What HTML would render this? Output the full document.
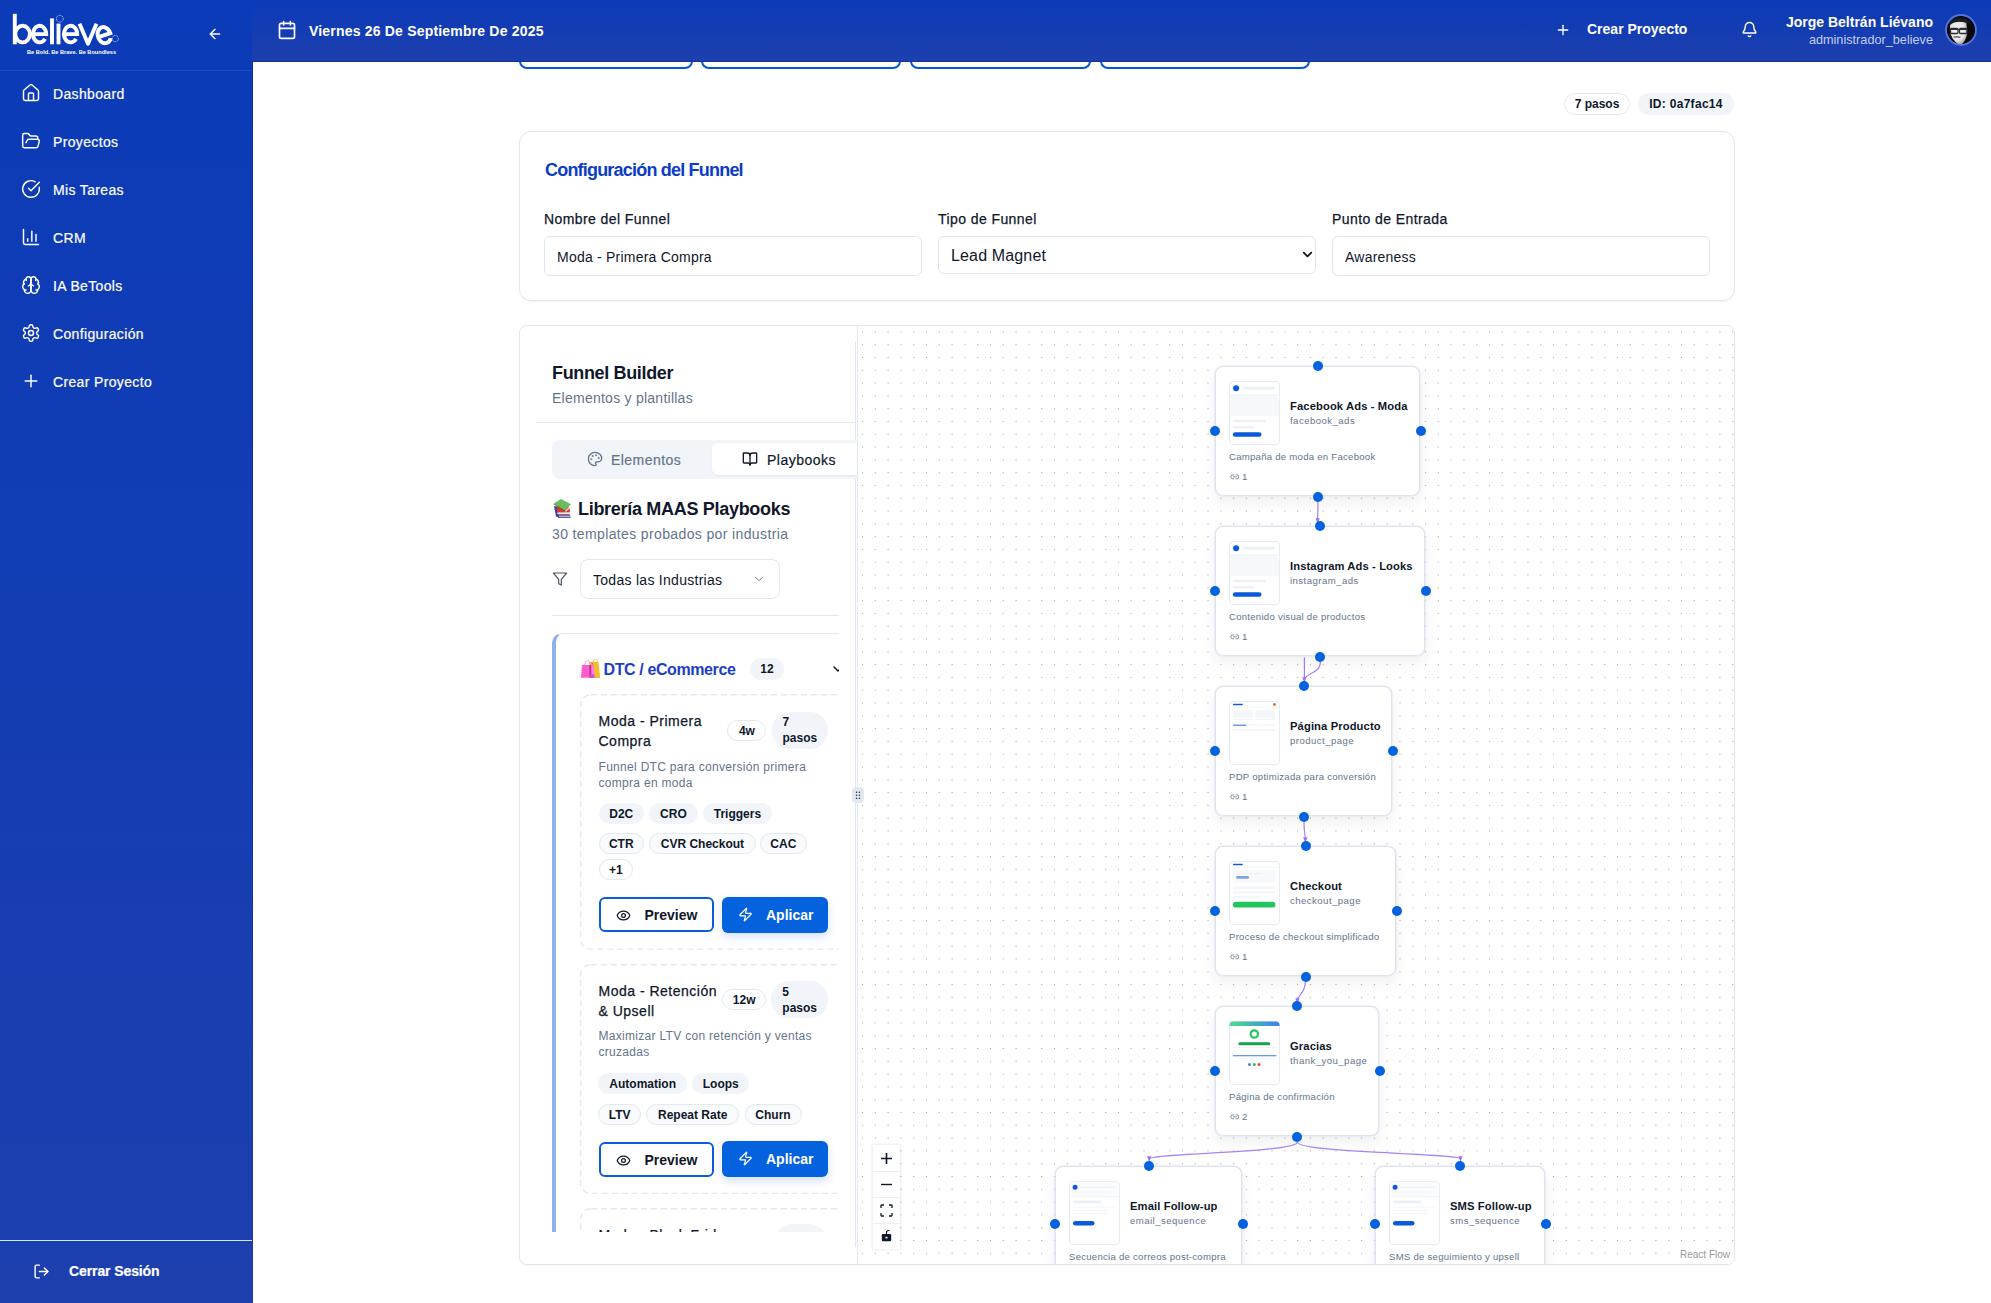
<!DOCTYPE html>
<html><head><meta charset="utf-8">
<style>
*{box-sizing:border-box;margin:0;padding:0}
html,body{width:1991px;height:1303px;overflow:hidden;background:#fff;font-family:"Liberation Sans",sans-serif;color:#0f172a}
.abs{position:absolute}
svg.ic{position:absolute;fill:none;stroke:currentColor;stroke-width:2;stroke-linecap:round;stroke-linejoin:round}
#sb{position:absolute;left:0;top:0;width:253px;height:1303px;background:linear-gradient(180deg,#0b3bb8 0%,#1d3fae 100%);color:#fff}
#tb{position:absolute;left:252px;top:0;width:1739px;height:62px;background:linear-gradient(180deg,#0b3ab8 0%,#1d3fae 100%);border-bottom:1px solid #1233a2;color:#fff;z-index:5}
.nav{position:absolute;left:0;width:252px;height:40px;color:#fff;font-size:14px}
.nav svg{left:21px;top:10.5px;width:20px;height:20px;stroke-width:1.75}
.nav span{position:absolute;left:53px;top:13.5px;line-height:16px;white-space:nowrap;letter-spacing:0.35px;-webkit-text-stroke:0.2px #fff}
.txt{position:absolute;white-space:nowrap;line-height:1}

.tabbox{position:absolute;top:-39px;height:46px;border:2px solid #0656d6;border-radius:8px;background:#fff}
.badge{position:absolute;height:21px;border-radius:11px;font-size:12px;font-weight:700;line-height:19px;text-align:center;white-space:nowrap}
.card{position:absolute;border:1px solid #e2e8f0;border-radius:12px;background:#fff;box-shadow:0 1px 2px rgba(15,23,42,0.05)}
.lbl{position:absolute;font-size:14px;white-space:nowrap;line-height:1;color:#0f172a;letter-spacing:0.42px;-webkit-text-stroke:0.25px #0f172a}
.inp{position:absolute;height:40px;border:1px solid #dfe5ee;border-radius:6px;background:#fff;font-size:14px;line-height:41px;padding-left:12px;color:#0f172a;white-space:nowrap;letter-spacing:0.22px}

.pbcard{position:absolute;left:28px;width:280px;border-radius:10px;background:#fff}
.pt{position:absolute;font-size:14px;line-height:20px;color:#0f172a;letter-spacing:0.5px;-webkit-text-stroke:0.25px #0f172a}
.pd{position:absolute;font-size:12px;line-height:16px;color:#64748b;letter-spacing:0.3px}
.tag{position:absolute;height:21px;border-radius:11px;font-size:12px;font-weight:700;line-height:22.5px;text-align:center;white-space:nowrap;background:#f1f5f9;color:#0f172a}
.tag.b{border:1px solid #e2e8f0;background:#f8fafc;line-height:20.5px}
.tag.w{border:1px solid #e2e8f0;background:#fff;line-height:20.5px}
.btnp{position:absolute;height:35px;border:2px solid #085ddb;border-radius:6px;background:#fff;font-size:14px;font-weight:700;color:#0f172a;white-space:nowrap}
.btna{position:absolute;height:36px;border-radius:6px;background:#0562de;font-size:14px;font-weight:700;color:#fff;white-space:nowrap;box-shadow:0 4px 10px rgba(11,90,214,0.18)}

.node{position:absolute;height:130px;border:1px solid #dde4ee;border-radius:8px;background:#fff;box-shadow:0 0 0 0.6px #e2e8f0,0 6px 14px rgba(15,23,42,0.07)}
.thumb{position:absolute;left:13px;top:13.6px;width:51px;height:64px}
.nt{position:absolute;left:74px;font-size:11.2px;font-weight:700;color:#0f172a;white-space:nowrap;line-height:1;letter-spacing:0.12px}
.ns{position:absolute;left:74px;font-size:9.6px;color:#64748b;white-space:nowrap;line-height:1;letter-spacing:0.45px}
.nd{position:absolute;left:13px;font-size:9.6px;color:#64748b;white-space:nowrap;line-height:1;letter-spacing:0.25px}
.hd{position:absolute;width:10px;height:10px;border-radius:50%;background:#0562de}
</style></head><body>

<!-- SIDEBAR -->
<div id="sb">
  <div class="abs" style="left:252px;top:0;width:1px;height:1303px;background:linear-gradient(180deg,#0a2ea6 0%,#0a2fa8 50%,#1a3cab 100%)"></div>
  <div class="abs" style="left:0;top:70px;width:252px;height:1px;background:rgba(255,255,255,0.08)"></div>
  <svg class="abs" style="left:0;top:0" width="125" height="60" viewBox="0 0 125 60">
    <g fill="none" stroke="#fff" stroke-width="3.9" stroke-linecap="butt">
      <path d="M14.8,13.8 V44.3"/>
      <ellipse cx="22.6" cy="34.1" rx="7.3" ry="8.3"/>
      <path d="M33.30,34.10 H46.20 A6.6,8.3 0 1 0 45.01,38.86"/>
      <path d="M52,18.4 V44.3"/>
      <path d="M58.5,23.6 V44.3"/>
      <path d="M64.30,34.10 H77.20 A6.6,8.3 0 1 0 76.01,38.86"/>
      <path d="M79.5,23.8 L88,43.8 L96.5,23.8" stroke-linejoin="round"/>
      <path d="M98.10,35.20 H110.60 A6.4,8.2 0 1 0 109.44,39.90" transform="rotate(-18 104.2 35.2)"/>
    </g>
    <circle cx="59.8" cy="18.7" r="3.4" fill="none" stroke="#fff" stroke-width="0.7" stroke-dasharray="1.1 0.7"/>
    <circle cx="115.3" cy="38.6" r="3.1" fill="none" stroke="#fff" stroke-width="0.7" stroke-dasharray="1.1 0.7"/>
    <text x="27" y="53.6" font-family="Liberation Sans" font-weight="700" font-size="5.6" fill="#fff" textLength="89" lengthAdjust="spacingAndGlyphs">Be Bold. Be Brave. Be Boundless</text>
  </svg>
  <div class="nav" style="top:72px"><svg class="ic" viewBox="0 0 24 24"><path d="M15 21v-8a1 1 0 0 0-1-1h-4a1 1 0 0 0-1 1v8"/><path d="M3 10a2 2 0 0 1 .709-1.528l7-5.999a2 2 0 0 1 2.582 0l7 5.999A2 2 0 0 1 21 10v9a2 2 0 0 1-2 2H5a2 2 0 0 1-2-2z"/></svg><span>Dashboard</span></div>
  <div class="nav" style="top:120px"><svg class="ic" viewBox="0 0 24 24"><path d="m6 14 1.5-2.9A2 2 0 0 1 9.240 10H20a2 2 0 0 1 1.940 2.5l-1.540 6a2 2 0 0 1-1.950 1.5H4a2 2 0 0 1-2-2V5a2 2 0 0 1 2-2h3.900a2 2 0 0 1 1.690.9l.810 1.200a2 2 0 0 0 1.670.900H18a2 2 0 0 1 2 2v2"/></svg><span>Proyectos</span></div>
  <div class="nav" style="top:168px"><svg class="ic" viewBox="0 0 24 24"><path d="M21.801 10A10 10 0 1 1 17 3.335"/><path d="m9 11 3 3L22 4"/></svg><span>Mis Tareas</span></div>
  <div class="nav" style="top:216px"><svg class="ic" viewBox="0 0 24 24"><path d="M3 3v16a2 2 0 0 0 2 2h16"/><path d="M18 17V9"/><path d="M13 17V5"/><path d="M8 17v-3"/></svg><span>CRM</span></div>
  <div class="nav" style="top:264px"><svg class="ic" viewBox="0 0 24 24"><path d="M12 5a3 3 0 1 0-5.997.125 4 4 0 0 0-2.526 5.770 4 4 0 0 0 .556 6.588A4 4 0 1 0 12 18Z"/><path d="M12 5a3 3 0 1 1 5.997.125 4 4 0 0 1 2.526 5.770 4 4 0 0 1-.556 6.588A4 4 0 1 1 12 18Z"/><path d="M15 13a4.500 4.500 0 0 1-3-4 4.500 4.500 0 0 1-3 4"/><path d="M17.599 6.500a3 3 0 0 0 .399-1.375"/><path d="M6.003 5.125A3 3 0 0 0 6.401 6.500"/><path d="M3.477 10.896a4 4 0 0 1 .585-.396"/><path d="M19.938 10.500a4 4 0 0 1 .585.396"/><path d="M6 18a4 4 0 0 1-1.967-.516"/><path d="M19.967 17.484A4 4 0 0 1 18 18"/></svg><span>IA BeTools</span></div>
  <div class="nav" style="top:312px"><svg class="ic" viewBox="0 0 24 24"><path d="M12.220 2h-.440a2 2 0 0 0-2 2v.180a2 2 0 0 1-1 1.730l-.430.250a2 2 0 0 1-2 0l-.150-.080a2 2 0 0 0-2.730.730l-.220.380a2 2 0 0 0 .730 2.730l.150.100a2 2 0 0 1 1 1.720v.510a2 2 0 0 1-1 1.740l-.150.090a2 2 0 0 0-.730 2.730l.220.380a2 2 0 0 0 2.730.730l.150-.080a2 2 0 0 1 2 0l.430.250a2 2 0 0 1 1 1.730V20a2 2 0 0 0 2 2h.440a2 2 0 0 0 2-2v-.180a2 2 0 0 1 1-1.730l.430-.250a2 2 0 0 1 2 0l.150.080a2 2 0 0 0 2.730-.730l.220-.390a2 2 0 0 0-.730-2.730l-.150-.080a2 2 0 0 1-1-1.740v-.500a2 2 0 0 1 1-1.740l.150-.090a2 2 0 0 0 .730-2.730l-.220-.380a2 2 0 0 0-2.730-.730l-.150.080a2 2 0 0 1-2 0l-.430-.250a2 2 0 0 1-1-1.730V4a2 2 0 0 0-2-2z"/><circle cx="12" cy="12" r="3"/></svg><span>Configuración</span></div>
  <div class="nav" style="top:360px"><svg class="ic" viewBox="0 0 24 24"><path d="M5 12h14"/><path d="M12 5v14"/></svg><span>Crear Proyecto</span></div>
  <div class="abs" style="left:0;top:1240px;width:252px;height:1px;background:rgba(255,255,255,0.85)"></div>
  <div class="nav" style="top:1250px"><svg class="ic" style="left:32.5px;top:12.5px;width:17px;height:17px;stroke-width:2" viewBox="0 0 24 24"><path d="M9 21H5a2 2 0 0 1-2-2V5a2 2 0 0 1 2-2h4"/><polyline points="16 17 21 12 16 7"/><line x1="21" x2="9" y1="12" y2="12"/></svg><span style="left:69px;top:12.5px;font-weight:700;letter-spacing:-0.1px">Cerrar Sesión</span></div>
  <svg class="ic" style="left:207px;top:26px;width:16px;height:16px;color:#fff" viewBox="0 0 24 24"><path d="m12 19-7-7 7-7"/><path d="M19 12H5"/></svg>
</div>

<!-- TOPBAR -->
<div id="tb">
  <svg class="ic" style="left:25px;top:20px;width:20px;height:20px" viewBox="0 0 24 24"><path d="M8 2v4"/><path d="M16 2v4"/><rect width="18" height="18" x="3" y="4" rx="2"/><path d="M3 10h18"/></svg>
  <div class="txt" style="left:57px;top:23.5px;font-size:14px;font-weight:700;letter-spacing:0.19px">Viernes 26 De Septiembre De 2025</div>
  <svg class="ic" style="left:1303px;top:22px;width:16px;height:16px" viewBox="0 0 24 24"><path d="M5 12h14"/><path d="M12 5v14"/></svg>
  <div class="txt" style="left:1335px;top:22px;font-size:14px;font-weight:700">Crear Proyecto</div>
  <svg class="ic" style="left:1489px;top:21px;width:17px;height:17px" viewBox="0 0 24 24"><path d="M10.268 21a2 2 0 0 0 3.464 0"/><path d="M3.262 15.326A1 1 0 0 0 4 17h16a1 1 0 0 0 .740-1.673C19.410 13.956 18 12.499 18 8A6 6 0 0 0 6 8c0 4.499-1.411 5.956-2.738 7.326"/></svg>
  <div class="txt" style="right:58px;top:15px;font-size:14px;font-weight:700;text-align:right">Jorge Beltrán Liévano</div>
  <div class="txt" style="right:58px;top:34px;font-size:12.7px;color:#c3cdf3;text-align:right">administrador_believe</div>
  <svg class="abs" style="left:1693px;top:14px" width="32" height="32" viewBox="0 0 32 32">
    <defs><clipPath id="avc"><circle cx="16" cy="16" r="14.2"/></clipPath>
    <radialGradient id="facg" cx="0.45" cy="0.4" r="0.6"><stop offset="0" stop-color="#fafafa"/><stop offset="0.7" stop-color="#e6e6e6"/><stop offset="1" stop-color="#a8a8a8"/></radialGradient></defs>
    <g clip-path="url(#avc)">
      <rect width="32" height="32" fill="#0a0a0a"/>
      <path d="M5 11 Q6 7 11 7.5 Q17 6.5 21.5 9 L22 20 Q21 26 17 30 Q14 31.5 11.5 29 Q7 25 5.5 20 Z" fill="url(#facg)"/>
      <path d="M3 9 Q8 3 16 4 Q24 4.5 26 10 Q22 7.5 17 8 Q10 7 5 11Z" fill="#1a1d22"/>
      <rect x="5.5" y="14.5" width="7.5" height="5" rx="1" fill="none" stroke="#2a2d33" stroke-width="1.3"/>
      <rect x="14.5" y="14.5" width="7.5" height="5" rx="1" fill="none" stroke="#2a2d33" stroke-width="1.3"/>
      <path d="M4 15.5 H23" stroke="#2a2d33" stroke-width="1.2"/>
      <path d="M8.5 23.2 Q12 22.2 15.5 23.4" stroke="#666" stroke-width="1.4" fill="none"/>
    </g>
    <circle cx="16" cy="16" r="15" fill="none" stroke="#5573dc" stroke-width="1.8"/>
  </svg>
</div>


<!-- MAIN -->
<div id="main" class="abs" style="left:253px;top:62px;width:1738px;height:1241px;overflow:hidden;background:#fff">

  <div class="tabbox" style="left:266px;width:174px"></div>
  <div class="tabbox" style="left:448px;width:200px"></div>
  <div class="tabbox" style="left:657px;width:181px"></div>
  <div class="tabbox" style="left:847px;width:210px"></div>
  <div class="badge" style="left:1311px;top:31px;width:66px;height:22px;line-height:21px;border:1px solid #e2e8f0;background:#fff">7 pasos</div>
  <div class="badge" style="left:1385px;top:31px;width:96px;height:22px;background:#f1f5f9;line-height:23px;letter-spacing:0.3px">ID: 0a7fac14</div>

  <div class="card" style="left:266px;top:69px;width:1216px;height:170px">
    <div class="txt" style="left:25px;top:29px;font-size:18px;font-weight:700;color:#0b3dc4;letter-spacing:-0.8px">Configuración del Funnel</div>
    <div class="lbl" style="left:24px;top:80px">Nombre del Funnel</div>
    <div class="lbl" style="left:418px;top:80px">Tipo de Funnel</div>
    <div class="lbl" style="left:812px;top:80px">Punto de Entrada</div>
    <div class="inp" style="left:24px;top:104px;width:378px">Moda - Primera Compra</div>
    <div class="inp" style="left:418px;top:104px;width:378px;height:37.5px;line-height:37px;font-size:16px;padding-left:12px;letter-spacing:0.15px">Lead Magnet
      <svg class="ic" style="right:0.5px;top:10px;width:15px;height:15px;stroke-width:2.8;color:#111" viewBox="0 0 24 24"><path d="m6 9 6 6 6-6"/></svg></div>
    <div class="inp" style="left:812px;top:104px;width:378px">Awareness</div>
  </div>

  <div class="card" style="left:266px;top:263px;width:1216px;height:940px;overflow:hidden;box-shadow:0 1px 2px rgba(15,23,42,0.04);border-radius:8px">
    <!-- canvas -->
    <div id="canvas" class="abs" style="left:337px;top:0;width:878px;height:939px;border-left:1px solid #e2e8f0;background-color:#fff;background-image:radial-gradient(circle,#a1a1aa 0.6px,transparent 0.9px);background-size:12.8px 12.8px;background-position:-1.9px -0.5px;overflow:hidden">
<!--CANVAS-START-->
<svg class="abs" style="left:0;top:0;overflow:visible" width="878" height="939" viewBox="858 326 878 939"><defs><marker id="ar" viewBox="0 0 10 10" refX="5" refY="5" markerWidth="4.5" markerHeight="4.5" orient="auto"><path d="M0,1 L10,5 L0,9 z" fill="#9b6ef8"/></marker></defs><path d="M1318,501 C1318,513.5 1317.6,513.5 1317.6,521" fill="none" stroke="#a27cf8" stroke-width="1.2" stroke-opacity="0.95" marker-end="url(#ar)"/><path d="M1320.4,662 C1320.4,673.5 1304.4,673.5 1304.4,680" fill="none" stroke="#a27cf8" stroke-width="1.2" stroke-opacity="0.95" marker-end="url(#ar)"/><path d="M1304,822 C1304,833.5 1305.3,833.5 1305.3,840" fill="none" stroke="#a27cf8" stroke-width="1.2" stroke-opacity="0.95" marker-end="url(#ar)"/><path d="M1305.3,982 C1305.3,994.0 1297.4,994.0 1297.4,1001" fill="none" stroke="#a27cf8" stroke-width="1.2" stroke-opacity="0.95" marker-end="url(#ar)"/><path d="M1297.3,1142 C1297.3,1153.0 1149.2,1153.0 1149.2,1159" fill="none" stroke="#a27cf8" stroke-width="1.2" stroke-opacity="0.95" marker-end="url(#ar)"/><path d="M1297.3,1142 C1297.3,1153.0 1460.5,1153.0 1460.5,1159" fill="none" stroke="#a27cf8" stroke-width="1.2" stroke-opacity="0.95" marker-end="url(#ar)"/><path d="M1304.4,657.5 L1304.4,680" stroke="#a27cf8" stroke-width="1.2"/></svg>
<div class="node" style="left:357px;top:40px;width:205px;height:130px"><svg class="thumb" viewBox="0 0 51 64"><rect x="0.5" y="0.5" width="50" height="63" rx="3.5" fill="#fff" stroke="#e6ebf2"/><path d="M0.8 13.8 H50.2 V34.8 H0.8Z" fill="#f6f8fb"/><line x1="0.8" y1="13.8" x2="50.2" y2="13.8" stroke="#eef1f5" stroke-width="0.8"/><circle cx="7.1" cy="7.2" r="3" fill="#0b5bd8"/><rect x="13.9" y="5.8" width="32.5" height="2.8" rx="1.4" fill="#edf0f5"/><rect x="3.9" y="38.7" width="32.5" height="2.6" rx="1.3" fill="#edf0f5"/><rect x="3.9" y="45" width="21.4" height="2.6" rx="1.3" fill="#eff2f6"/><rect x="3.9" y="51.3" width="28.6" height="4.5" rx="2.25" fill="#0b5bd8"/></svg><div class="nt" style="top:33.82px">Facebook Ads - Moda</div><div class="ns" style="top:48.67px">facebook_ads</div><div class="nd" style="top:85.07px">Campaña de moda en Facebook</div><svg class="ic" style="left:13.5px;top:105.0px;width:9.6px;height:9.6px;color:#64748b;stroke-width:2" viewBox="0 0 24 24"><path d="M9 17H7A5 5 0 0 1 7 7h2"/><path d="M15 7h2a5 5 0 1 1 0 10h-2"/><line x1="8" x2="16" y1="12" y2="12"/></svg><div class="nd" style="left:26px;top:104.77px">1</div></div>
<div class="hd" style="left:455.0px;top:35.2px"></div>
<div class="hd" style="left:455.0px;top:165.8px"></div>
<div class="hd" style="left:352px;top:100.2px"></div>
<div class="hd" style="left:557.5px;top:100.2px"></div>
<div class="node" style="left:357px;top:200px;width:210px;height:130px"><svg class="thumb" viewBox="0 0 51 64"><rect x="0.5" y="0.5" width="50" height="63" rx="3.5" fill="#fff" stroke="#e6ebf2"/><path d="M0.8 13.8 H50.2 V34.8 H0.8Z" fill="#f6f8fb"/><line x1="0.8" y1="13.8" x2="50.2" y2="13.8" stroke="#eef1f5" stroke-width="0.8"/><circle cx="7.1" cy="7.2" r="3" fill="#0b5bd8"/><rect x="13.9" y="5.8" width="32.5" height="2.8" rx="1.4" fill="#edf0f5"/><rect x="3.9" y="38.7" width="32.5" height="2.6" rx="1.3" fill="#edf0f5"/><rect x="3.9" y="45" width="21.4" height="2.6" rx="1.3" fill="#eff2f6"/><rect x="3.9" y="51.3" width="28.6" height="4.5" rx="2.25" fill="#0b5bd8"/></svg><div class="nt" style="top:33.82px">Instagram Ads - Looks</div><div class="ns" style="top:48.67px">instagram_ads</div><div class="nd" style="top:85.07px">Contenido visual de productos</div><svg class="ic" style="left:13.5px;top:105.0px;width:9.6px;height:9.6px;color:#64748b;stroke-width:2" viewBox="0 0 24 24"><path d="M9 17H7A5 5 0 0 1 7 7h2"/><path d="M15 7h2a5 5 0 1 1 0 10h-2"/><line x1="8" x2="16" y1="12" y2="12"/></svg><div class="nd" style="left:26px;top:104.77px">1</div></div>
<div class="hd" style="left:457.1px;top:195.2px"></div>
<div class="hd" style="left:457.1px;top:325.8px"></div>
<div class="hd" style="left:352px;top:260.2px"></div>
<div class="hd" style="left:562.5px;top:260.2px"></div>
<div class="node" style="left:357px;top:360px;width:177px;height:130px"><svg class="thumb" viewBox="0 0 51 64"><rect x="0.5" y="0.5" width="50" height="63" rx="3.5" fill="#fff" stroke="#e6ebf2"/><rect x="3.9" y="2.7" width="10" height="1.6" rx="0.8" fill="#0b5bd8"/><circle cx="45.5" cy="3.5" r="1.4" fill="#ea6a12"/><line x1="0.8" y1="6.6" x2="50.2" y2="6.6" stroke="#eef1f5" stroke-width="0.6"/><rect x="4.5" y="9.5" width="19" height="7.5" rx="1.5" fill="#f3f6fa"/><rect x="26.5" y="9.5" width="19.5" height="7.5" rx="1.5" fill="#f3f6fa"/><rect x="4.5" y="17.8" width="19" height="1.3" fill="#f1f3f6"/><rect x="26.5" y="17.8" width="19.5" height="1.3" fill="#f1f3f6"/><rect x="3.9" y="23.4" width="13.8" height="1.6" rx="0.8" fill="#6d9cec"/><rect x="19.5" y="23.6" width="12" height="1.2" fill="#f1f3f6"/><rect x="33.5" y="23.6" width="12.5" height="1.2" fill="#f1f3f6"/><rect x="3.9" y="28.3" width="42.5" height="1.8" rx="0.9" fill="#f1f3f6"/></svg><div class="nt" style="top:33.82px">Página Producto</div><div class="ns" style="top:48.67px">product_page</div><div class="nd" style="top:85.07px">PDP optimizada para conversión</div><svg class="ic" style="left:13.5px;top:105.0px;width:9.6px;height:9.6px;color:#64748b;stroke-width:2" viewBox="0 0 24 24"><path d="M9 17H7A5 5 0 0 1 7 7h2"/><path d="M15 7h2a5 5 0 1 1 0 10h-2"/><line x1="8" x2="16" y1="12" y2="12"/></svg><div class="nd" style="left:26px;top:104.77px">1</div></div>
<div class="hd" style="left:441.0px;top:355.2px"></div>
<div class="hd" style="left:441.0px;top:485.8px"></div>
<div class="hd" style="left:352px;top:420.2px"></div>
<div class="hd" style="left:529.5px;top:420.2px"></div>
<div class="node" style="left:357px;top:520px;width:181px;height:130px"><svg class="thumb" viewBox="0 0 51 64"><rect x="0.5" y="0.5" width="50" height="63" rx="3.5" fill="#fff" stroke="#e6ebf2"/><rect x="3.9" y="2.7" width="10" height="1.6" rx="0.8" fill="#0b5bd8"/><line x1="0.8" y1="6.6" x2="50.2" y2="6.6" stroke="#eef1f5" stroke-width="0.6"/><rect x="3.5" y="9" width="43.5" height="12.5" rx="2" fill="#f8f9fb"/><rect x="7" y="11.8" width="26" height="1.2" fill="#eef1f5"/><rect x="7" y="15" width="13" height="2.8" rx="1.4" fill="#7fa4e6"/><rect x="3.9" y="25.5" width="42.5" height="2.4" rx="1.2" fill="#f3f5f8"/><rect x="3.9" y="30.2" width="42.5" height="2.4" rx="1.2" fill="#f3f5f8"/><rect x="3.9" y="34.9" width="28" height="2.4" rx="1.2" fill="#f3f5f8"/><rect x="3.9" y="40.8" width="42.5" height="5.8" rx="2.9" fill="#22c55e"/></svg><div class="nt" style="top:33.82px">Checkout</div><div class="ns" style="top:48.67px">checkout_page</div><div class="nd" style="top:85.07px">Proceso de checkout simplificado</div><svg class="ic" style="left:13.5px;top:105.0px;width:9.6px;height:9.6px;color:#64748b;stroke-width:2" viewBox="0 0 24 24"><path d="M9 17H7A5 5 0 0 1 7 7h2"/><path d="M15 7h2a5 5 0 1 1 0 10h-2"/><line x1="8" x2="16" y1="12" y2="12"/></svg><div class="nd" style="left:26px;top:104.77px">1</div></div>
<div class="hd" style="left:442.5px;top:515.2px"></div>
<div class="hd" style="left:442.5px;top:645.8px"></div>
<div class="hd" style="left:352px;top:580.2px"></div>
<div class="hd" style="left:533.5px;top:580.2px"></div>
<div class="node" style="left:357px;top:680px;width:164px;height:130px"><svg class="thumb" viewBox="0 0 51 64"><rect x="0.5" y="0.5" width="50" height="63" rx="3.5" fill="#fff" stroke="#e6ebf2"/><defs><linearGradient id="gg" x1="0" x2="1"><stop offset="0" stop-color="#4ade80"/><stop offset="1" stop-color="#3b82f6"/></linearGradient></defs><path d="M0.5 4 A3.5 3.5 0 0 1 4 0.5 H47 A3.5 3.5 0 0 1 50.5 4 V5 H0.5Z" fill="url(#gg)"/><circle cx="25.3" cy="13" r="3.7" fill="none" stroke="#22c55e" stroke-width="2.2"/><rect x="9.3" y="21.3" width="32" height="3" rx="1.5" fill="#16a34a"/><rect x="3.9" y="26" width="42.5" height="0.9" fill="#eef1f5"/><rect x="10.5" y="29.3" width="29" height="0.9" fill="#f1f3f6"/><rect x="3.9" y="34.1" width="43.5" height="1.2" fill="#5b8ef0"/><rect x="9.5" y="37.2" width="31.5" height="0.8" fill="#f1f3f6"/><circle cx="20.5" cy="43.5" r="1.5" fill="#3b82f6"/><circle cx="25.3" cy="43.5" r="1.5" fill="#22c55e"/><circle cx="30" cy="43.5" r="1.5" fill="#ef4444"/></svg><div class="nt" style="top:33.82px">Gracias</div><div class="ns" style="top:48.67px">thank_you_page</div><div class="nd" style="top:85.07px">Página de confirmación</div><svg class="ic" style="left:13.5px;top:105.0px;width:9.6px;height:9.6px;color:#64748b;stroke-width:2" viewBox="0 0 24 24"><path d="M9 17H7A5 5 0 0 1 7 7h2"/><path d="M15 7h2a5 5 0 1 1 0 10h-2"/><line x1="8" x2="16" y1="12" y2="12"/></svg><div class="nd" style="left:26px;top:104.77px">2</div></div>
<div class="hd" style="left:434.3px;top:675.2px"></div>
<div class="hd" style="left:434.3px;top:805.8px"></div>
<div class="hd" style="left:352px;top:740.2px"></div>
<div class="hd" style="left:516.5px;top:740.2px"></div>
<div class="node" style="left:197px;top:840px;width:187px;height:116.4px"><svg class="thumb" viewBox="0 0 51 64"><rect x="0.5" y="0.5" width="50" height="63" rx="3.5" fill="#fff" stroke="#e6ebf2"/><path d="M0.8 15.7 V4 A3.2 3.2 0 0 1 4 0.8 H47 A3.2 3.2 0 0 1 50.2 4 V15.7Z" fill="#fafbfc"/><line x1="0.8" y1="15.7" x2="50.2" y2="15.7" stroke="#eef1f5" stroke-width="0.8"/><circle cx="6.1" cy="6.3" r="2.5" fill="#0b5bd8"/><rect x="12" y="5.7" width="34.7" height="1.2" fill="#eef1f5"/><rect x="4" y="10.6" width="32" height="1.2" fill="#f1f3f6"/><rect x="4" y="19.6" width="28" height="2.6" rx="1.3" fill="#eaf0f7"/><rect x="4" y="25.6" width="42.7" height="1.1" fill="#f3f5f8"/><rect x="4" y="28.8" width="36" height="1.1" fill="#f3f5f8"/><rect x="4" y="31.9" width="34.5" height="1.1" fill="#f3f5f8"/><rect x="4" y="40" width="21.5" height="4.6" rx="2.3" fill="#0b5bd8"/></svg><div class="nt" style="top:33.82px">Email Follow-up</div><div class="ns" style="top:48.67px">email_sequence</div><div class="nd" style="top:85.07px">Secuencia de correos post-compra</div></div>
<div class="hd" style="left:286.0px;top:835.2px"></div>
<div class="hd" style="left:286.0px;top:952.2px"></div>
<div class="hd" style="left:192px;top:893.4px"></div>
<div class="hd" style="left:379.5px;top:893.4px"></div>
<div class="node" style="left:517px;top:840px;width:170px;height:116.4px"><svg class="thumb" viewBox="0 0 51 64"><rect x="0.5" y="0.5" width="50" height="63" rx="3.5" fill="#fff" stroke="#e6ebf2"/><path d="M0.8 15.7 V4 A3.2 3.2 0 0 1 4 0.8 H47 A3.2 3.2 0 0 1 50.2 4 V15.7Z" fill="#fafbfc"/><line x1="0.8" y1="15.7" x2="50.2" y2="15.7" stroke="#eef1f5" stroke-width="0.8"/><circle cx="6.1" cy="6.3" r="2.5" fill="#0b5bd8"/><rect x="12" y="5.7" width="34.7" height="1.2" fill="#eef1f5"/><rect x="4" y="10.6" width="32" height="1.2" fill="#f1f3f6"/><rect x="4" y="19.6" width="28" height="2.6" rx="1.3" fill="#eaf0f7"/><rect x="4" y="25.6" width="42.7" height="1.1" fill="#f3f5f8"/><rect x="4" y="28.8" width="36" height="1.1" fill="#f3f5f8"/><rect x="4" y="31.9" width="34.5" height="1.1" fill="#f3f5f8"/><rect x="4" y="40" width="21.5" height="4.6" rx="2.3" fill="#0b5bd8"/></svg><div class="nt" style="top:33.82px">SMS Follow-up</div><div class="ns" style="top:48.67px">sms_sequence</div><div class="nd" style="top:85.07px">SMS de seguimiento y upsell</div></div>
<div class="hd" style="left:597.1px;top:835.2px"></div>
<div class="hd" style="left:597.1px;top:952.2px"></div>
<div class="hd" style="left:512px;top:893.4px"></div>
<div class="hd" style="left:682.5px;top:893.4px"></div>
<div class="abs" style="left:14.8px;top:818.7px;width:27px;height:104px;background:#fefefe;box-shadow:0 0 2px 1px rgba(0,0,0,0.08)">
<div class="abs" style="left:0;top:26px;width:27px;height:1px;background:#eee"></div>
<div class="abs" style="left:0;top:52px;width:27px;height:1px;background:#eee"></div>
<div class="abs" style="left:0;top:78px;width:27px;height:1px;background:#eee"></div>
<svg class="abs" style="left:7px;top:7px" width="13" height="13" viewBox="0 0 13 13"><path d="M6.5 1V12M1 6.5H12" stroke="#0f172a" stroke-width="1.6"/></svg>
<svg class="abs" style="left:7px;top:33px" width="13" height="13" viewBox="0 0 13 13"><path d="M1 6.5H12" stroke="#0f172a" stroke-width="1.4"/></svg>
<svg class="abs" style="left:7px;top:59px" width="13" height="13" viewBox="0 0 13 13"><path d="M1 4V1.5A.5.5 0 0 1 1.5 1H4M9 1H11.5A.5.5 0 0 1 12 1.5V4M12 9V11.5A.5.5 0 0 1 11.5 12H9M4 12H1.5A.5.5 0 0 1 1 11.5V9" stroke="#0f172a" stroke-width="1.3" fill="none"/></svg>
<svg class="abs" style="left:7px;top:84px" width="13" height="13" viewBox="0 0 13 13"><rect x="1.8" y="5" width="9.4" height="7.2" rx="1.3" fill="#0f172a"/><rect x="5.5" y="7.8" width="2" height="1.6" fill="#fff"/><path d="M6.5 5 V3.2 A2 2 0 0 1 9.5 1.8" stroke="#0f172a" stroke-width="1.2" fill="none"/></svg>
</div>
<div class="abs" style="left:818px;top:921px;padding:2px 4px;font-size:10px;line-height:12px;color:#999;background:rgba(255,255,255,0.5)">React Flow</div>
<!--CANVAS-END-->
    </div>
    <div class="abs" style="left:332px;top:461px;width:12px;height:16px;border-radius:4px;background:#e2e8f0;z-index:3">
      <svg class="abs" style="left:0;top:0" width="12" height="16" viewBox="0 0 12 16"><g fill="#1e293b"><circle cx="4.5" cy="5.2" r="0.75"/><circle cx="7.4" cy="5.2" r="0.75"/><circle cx="4.5" cy="8.2" r="0.75"/><circle cx="7.4" cy="8.2" r="0.75"/><circle cx="4.5" cy="11.2" r="0.75"/><circle cx="7.4" cy="11.2" r="0.75"/></g></svg>
    </div>
    <!-- panel -->
    <div id="panel" class="abs" style="left:0;top:0;width:337px;height:939px;overflow:hidden">
      <div class="abs" style="left:335px;top:16px;width:1px;height:905px;background:#e2e8f0"></div>

      <div class="txt" style="left:32px;top:37.5px;font-size:18px;font-weight:700;color:#0f172a;letter-spacing:-0.35px">Funnel Builder</div>
      <div class="txt" style="left:32px;top:64.5px;font-size:14px;color:#64748b;letter-spacing:0.25px">Elementos y plantillas</div>
      <div class="abs" style="left:16px;top:96px;width:320px;height:1px;background:#e2e8f0"></div>
      <div class="abs" style="left:32px;top:113.5px;width:330px;height:39px;border-radius:8px;background:#f1f5f9"></div>
      <div class="abs" style="left:192px;top:117px;width:160px;height:32px;border-radius:6px;background:#fff;box-shadow:0 1px 2px rgba(0,0,0,0.06)"></div>
      <svg class="ic" style="left:67px;top:125px;width:16px;height:16px;color:#64748b" viewBox="0 0 24 24"><circle cx="13.5" cy="6.5" r=".5" fill="currentColor"/><circle cx="17.5" cy="10.5" r=".5" fill="currentColor"/><circle cx="8.5" cy="7.5" r=".5" fill="currentColor"/><circle cx="6.5" cy="12.5" r=".5" fill="currentColor"/><path d="M12 2C6.500 2 2 6.500 2 12s4.500 10 10 10c.926 0 1.648-.746 1.648-1.688 0-.437-.180-.835-.437-1.125-.290-.289-.438-.652-.438-1.125a1.640 1.640 0 0 1 1.668-1.668h1.996c3.051 0 5.555-2.503 5.555-5.554C21.965 6.012 17.461 2 12 2z"/></svg>
      <div class="txt" style="left:91px;top:127px;font-size:14px;color:#64748b;letter-spacing:0.45px;-webkit-text-stroke:0.2px #64748b">Elementos</div>
      <svg class="ic" style="left:222px;top:125px;width:16px;height:16px;color:#0f172a" viewBox="0 0 24 24"><path d="M12 7v14"/><path d="M3 18a1 1 0 0 1-1-1V4a1 1 0 0 1 1-1h5a4 4 0 0 1 4 4 4 4 0 0 1 4-4h5a1 1 0 0 1 1 1v13a1 1 0 0 1-1 1h-6a3 3 0 0 0-3 3 3 3 0 0 0-3-3z"/></svg>
      <div class="txt" style="left:247px;top:127px;font-size:14px;color:#0f172a;letter-spacing:0.5px;-webkit-text-stroke:0.2px #0f172a">Playbooks</div>
      <svg class="abs" style="left:33px;top:172px" width="20" height="21" viewBox="0 0 20 21">
<path d="M4.5 17.5 H17.2 L17.6 20 H5.2Z" fill="#2c3f9a"/><path d="M5 18.2 H17 V19.3 H5.4Z" fill="#d6dde6"/>
<path d="M1 8 L4 8.5 L6 19.5 L3 18.5Z" fill="#2d47a8"/>
<path d="M3.5 8.5 L16.5 9 L17 14.5 L4.3 15Z" fill="#e0352b"/>
<path d="M4.3 14.5 H16.8 V16.3 H4.6Z" fill="#e6ecef"/><path d="M4.6 16.3 H16.8 V17.5 H4.8Z" fill="#8a2a4a"/>
<path d="M0.8 5.5 L8 1 L18 6.3 L11.8 12.6Z" fill="#6dbb5e"/><path d="M0.8 5.5 L11.8 12.6 L12.2 13.6 L1 6.6Z" fill="#1f7a1f"/>
<path d="M12.2 12.8 L18 7.2 L18.2 8.8 L12.6 14Z" fill="#e8edf0"/>
</svg>
      <div class="txt" style="left:58px;top:174px;font-size:18px;font-weight:700;color:#0f172a;letter-spacing:-0.3px">Librería MAAS Playbooks</div>
      <div class="txt" style="left:32px;top:200.5px;font-size:14px;color:#64748b;letter-spacing:0.37px">30 templates probados por industria</div>
      <svg class="ic" style="left:32px;top:244.5px;width:16px;height:16px;color:#475569;stroke-width:1.8" viewBox="0 0 24 24"><polygon points="22 3 2 3 10 12.460 10 19 14 21 14 12.460 22 3"/></svg>
      <div class="abs" style="left:60px;top:233px;width:200px;height:40px;border:1px solid #e2e8f0;border-radius:8px;background:#fff"></div>
      <div class="txt" style="left:73px;top:246.5px;font-size:14px;color:#0f172a;letter-spacing:0.28px">Todas las Industrias</div>
      <svg class="ic" style="left:232px;top:246px;width:14px;height:14px;color:#64748b;stroke-width:1.6" viewBox="0 0 24 24"><path d="m6 9 6 6 6-6"/></svg>
      <div class="abs" style="left:32px;top:289px;width:287px;height:1px;background:#e2e8f0"></div>
      <!-- list -->
      <div id="list" class="abs" style="left:32px;top:294px;width:287px;height:612px;overflow:hidden">

        <div class="abs" style="left:0;top:12.8px;width:320px;height:700px;border:1px solid #e2e8f0;border-left:4px solid #8fb0ef;border-radius:10px 0 0 0"></div>
        <svg class="abs" style="left:27.5px;top:39px" width="21" height="20" viewBox="0 0 21 20">
<path d="M13 3.2 Q13.5 0.3 15.5 0.3 Q17.5 0.3 18 3.2" stroke="#f3c445" stroke-width="0.9" fill="none"/>
<path d="M9 3 H18.5 L20.2 19 H11Z" fill="#efbf2c"/><path d="M11.5 3.5 H12.7 L13.2 19 H12Z" fill="#e0701a"/>
<path d="M4.5 6.2 Q5 1.5 7.5 1.5 Q10 1.5 10.8 6.2" stroke="#f49ad6" stroke-width="0.9" fill="none"/>
<path d="M2 6 H13.6 L14.6 18.8 H0.9Z" fill="#fb5fcf"/><path d="M9.5 6 H11.2 L11.6 18.8 H9.6Z" fill="#c4227a"/><path d="M11.2 6 H13.6 L14.6 18.8 H11.6Z" fill="#ff7ff0"/>
<path d="M10 15.5 Q12 14 14.3 16 L14.6 18.8 H10Z" fill="#cc4fd0"/>
</svg>
        <div class="txt" style="left:51.6px;top:41.5px;font-size:16px;font-weight:700;color:#1d3ec4;letter-spacing:-0.4px">DTC / eCommerce</div>
        <div class="badge" style="left:198px;top:38px;width:34px;height:22px;line-height:22px;background:#f1f5f9">12</div>
        <svg class="ic" style="left:277.8px;top:40.6px;width:16px;height:16px;color:#0f172a;stroke-width:2.2" viewBox="0 0 24 24"><path d="m6 9 6 6 6-6"/></svg>
<div class="pbcard" style="left:28px;top:73.8px;width:290px;height:255.9px"><svg class="abs" style="left:0;top:0" width="290" height="255.9"><rect x="0.75" y="0.75" width="288.5" height="254.4" rx="10" fill="none" stroke="#e2e8f0" stroke-width="1.4" stroke-dasharray="6 4"/></svg></div>
<div class="pt" style="left:46.5px;top:91.1px;white-space:nowrap">Moda - Primera<br>Compra</div>
<div class="tag w" style="left:175.4px;top:99.6px;width:39.0px">4w</div>
<div class="abs" style="left:219.5px;top:91.5px;width:56.4px;height:37px;border-radius:18px;background:#f1f5f9"></div>
<div class="abs" style="left:230.5px;top:94.0px;font-size:12px;font-weight:700;line-height:16px;color:#0f172a">7<br>pasos</div>
<div class="pd" style="left:46.5px;top:139px;white-space:nowrap">Funnel DTC para conversión primera<br>compra en moda</div>
<div class="tag " style="left:46.5px;top:183.3px;width:45.5px">D2C</div>
<div class="tag " style="left:97.3px;top:183.3px;width:48.3px">CRO</div>
<div class="tag " style="left:150.5px;top:183.3px;width:69.8px">Triggers</div>
<div class="tag b" style="left:46.5px;top:213.4px;width:45.5px">CTR</div>
<div class="tag b" style="left:97.3px;top:213.4px;width:106.3px">CVR Checkout</div>
<div class="tag b" style="left:208px;top:213.4px;width:46.6px">CAC</div>
<div class="tag w" style="left:46.5px;top:239.2px;width:34.9px">+1</div>
<div class="btnp" style="left:46.5px;top:277.3px;width:115px"><svg class="ic" style="left:15.5px;top:9px;width:15px;height:15px;stroke-width:2" viewBox="0 0 24 24"><path d="M2.062 12.348a1 1 0 0 1 0-.696 10.750 10.750 0 0 1 19.876 0 1 1 0 0 1 0 .696 10.750 10.750 0 0 1-19.876 0"/><circle cx="12" cy="12" r="3"/></svg><span class="abs" style="left:44px;top:8px;line-height:16px">Preview</span></div>
<div class="btna" style="left:170px;top:276.8px;width:106px"><svg class="ic" style="left:16px;top:10px;width:15px;height:15px;stroke-width:2" viewBox="0 0 24 24"><path d="M4 14a1 1 0 0 1-.780-1.630l9.900-10.200a.500.500 0 0 1 .860.460l-1.920 6.020A1 1 0 0 0 13 10h7a1 1 0 0 1 .780 1.630l-9.900 10.200a.500.500 0 0 1-.860-.460l1.920-6.020A1 1 0 0 0 11 14z"/></svg><span class="abs" style="left:44px;top:10px;line-height:16px">Aplicar</span></div>
<div class="pbcard" style="left:28px;top:344px;width:290px;height:230.3px"><svg class="abs" style="left:0;top:0" width="290" height="230.3"><rect x="0.75" y="0.75" width="288.5" height="228.8" rx="10" fill="none" stroke="#e2e8f0" stroke-width="1.4" stroke-dasharray="6 4"/></svg></div>
<div class="pt" style="left:46.5px;top:361.1px;white-space:nowrap">Moda - Retención<br>&amp; Upsell</div>
<div class="tag w" style="left:170px;top:369.3px;width:44.4px">12w</div>
<div class="abs" style="left:219.3px;top:361.4px;width:56.6px;height:37px;border-radius:18px;background:#f1f5f9"></div>
<div class="abs" style="left:230.3px;top:363.9px;font-size:12px;font-weight:700;line-height:16px;color:#0f172a">5<br>pasos</div>
<div class="pd" style="left:46.5px;top:408.4px;white-space:nowrap">Maximizar LTV con retención y ventas<br>cruzadas</div>
<div class="tag " style="left:46px;top:453.3px;width:89.3px">Automation</div>
<div class="tag " style="left:140.2px;top:453.3px;width:57.2px">Loops</div>
<div class="tag b" style="left:46px;top:483.5px;width:43.4px">LTV</div>
<div class="tag b" style="left:94px;top:483.5px;width:93.4px">Repeat Rate</div>
<div class="tag b" style="left:192.5px;top:483.5px;width:57.0px">Churn</div>
<div class="btnp" style="left:46.5px;top:521.5px;width:115px"><svg class="ic" style="left:15.5px;top:9px;width:15px;height:15px;stroke-width:2" viewBox="0 0 24 24"><path d="M2.062 12.348a1 1 0 0 1 0-.696 10.750 10.750 0 0 1 19.876 0 1 1 0 0 1 0 .696 10.750 10.750 0 0 1-19.876 0"/><circle cx="12" cy="12" r="3"/></svg><span class="abs" style="left:44px;top:8px;line-height:16px">Preview</span></div>
<div class="btna" style="left:170px;top:521.0px;width:106px"><svg class="ic" style="left:16px;top:10px;width:15px;height:15px;stroke-width:2" viewBox="0 0 24 24"><path d="M4 14a1 1 0 0 1-.780-1.630l9.900-10.200a.500.500 0 0 1 .860.460l-1.920 6.020A1 1 0 0 0 13 10h7a1 1 0 0 1 .780 1.630l-9.900 10.200a.500.500 0 0 1-.860-.460l1.920-6.020A1 1 0 0 0 11 14z"/></svg><span class="abs" style="left:44px;top:10px;line-height:16px">Aplicar</span></div>
<div class="pbcard" style="left:28px;top:588px;width:290px;height:200px"><svg class="abs" style="left:0;top:0" width="290" height="200.0"><rect x="0.75" y="0.75" width="288.5" height="198.5" rx="10" fill="none" stroke="#e2e8f0" stroke-width="1.4" stroke-dasharray="6 4"/></svg></div>
<div class="pt" style="left:46.5px;top:605.1px;white-space:nowrap">Moda - Black Friday</div>
<div class="abs" style="left:223px;top:604px;width:52px;height:37px;border-radius:18px;background:#f1f5f9"></div>
      </div>
    </div>
  </div>
</div>
</body></html>
